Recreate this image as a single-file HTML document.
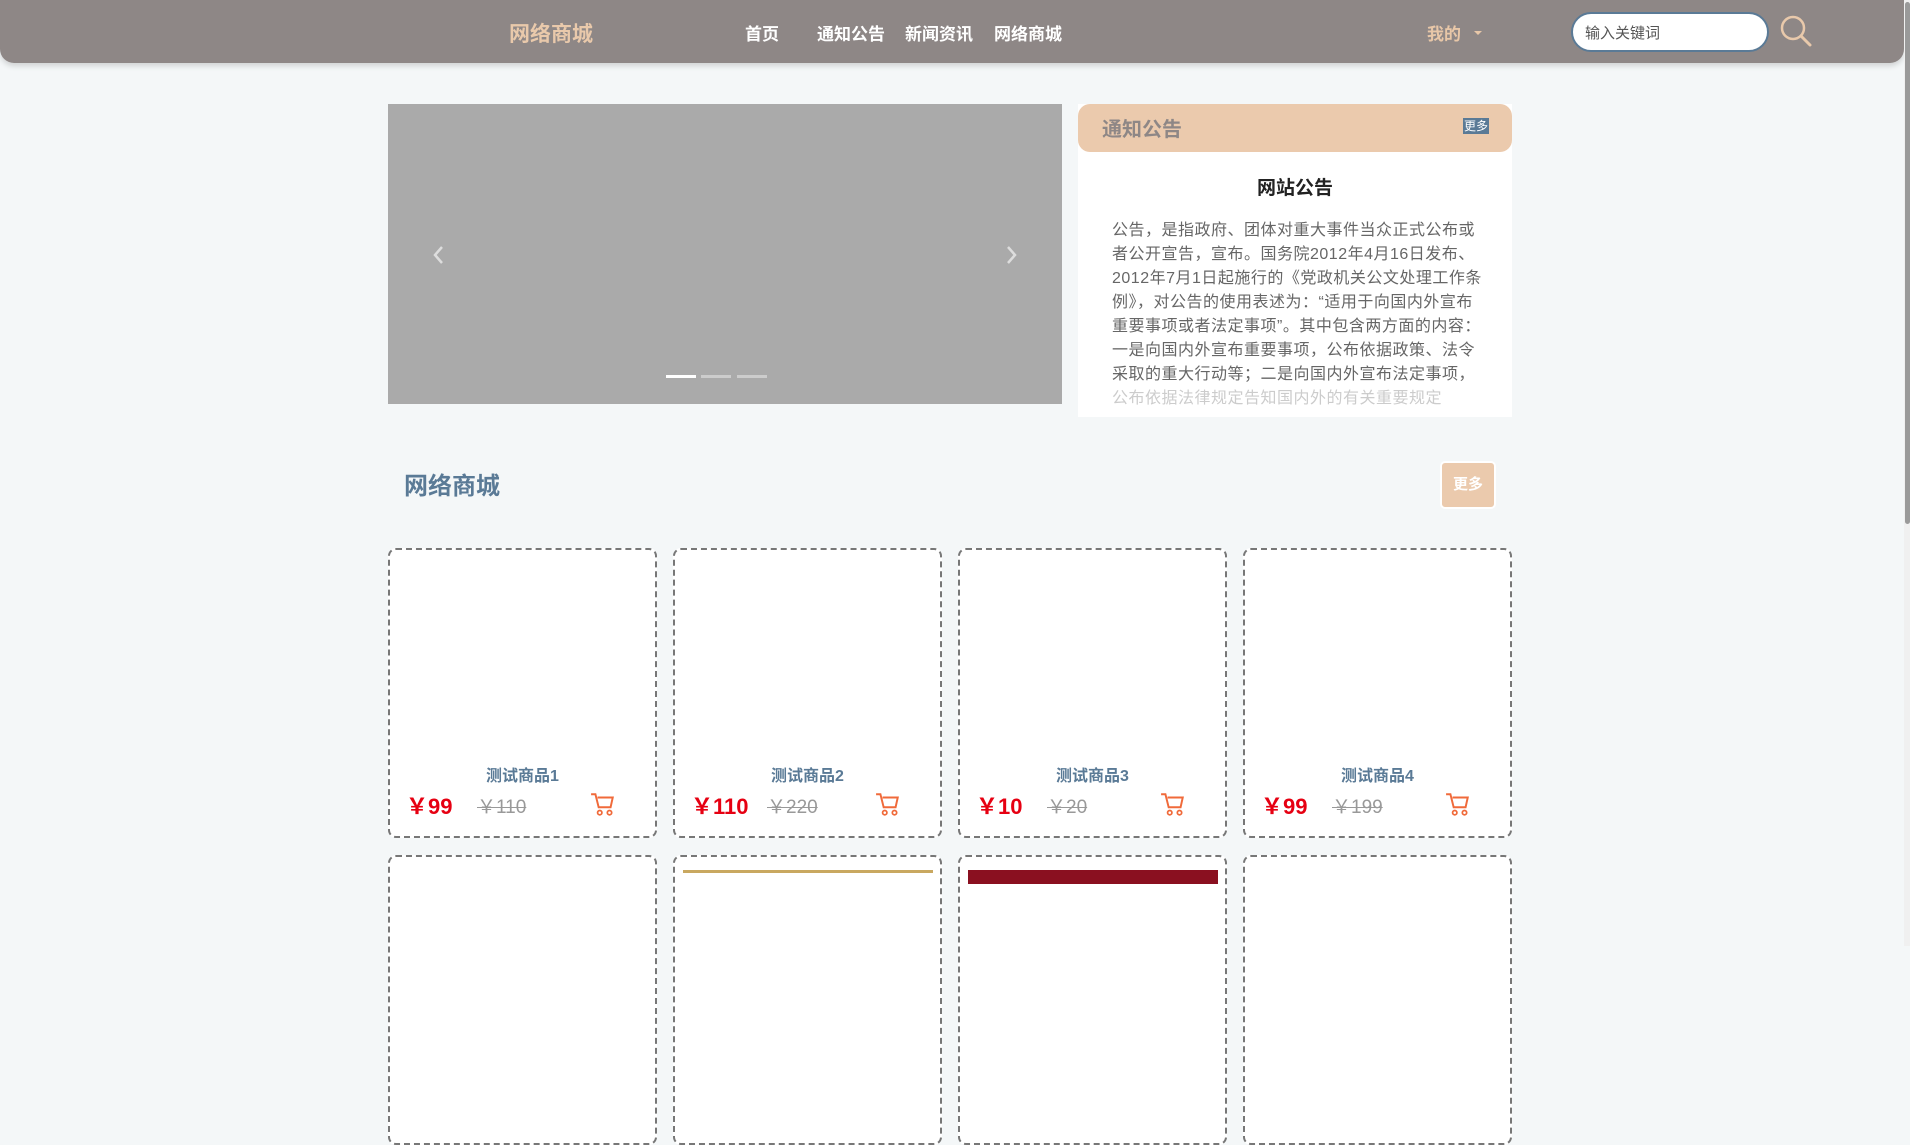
<!DOCTYPE html>
<html><head><meta charset="utf-8"><style>
*{margin:0;padding:0;box-sizing:border-box}
body{width:1910px;height:946px;overflow:hidden;background:#f4f7f8;font-family:"Liberation Sans","Noto Sans CJK SC",sans-serif;position:relative}
.a{position:absolute}
.hdr{left:0;top:0;width:1904px;height:63px;background:#8e8786;border-radius:0 0 14px 14px;box-shadow:0 3px 6px rgba(0,0,0,.15)}
.nav{color:#fff;font-weight:bold;font-size:17px;top:20px}
.card{width:269px;height:290px;border:2px dashed #777;border-radius:8px;background:#fff}
.name{left:0;width:100%;text-align:center;top:212px;color:#5a7a96;font-weight:bold;font-size:16px}
.pr{left:16px;top:239px;color:#e60012;font-weight:bold;font-size:22px}
.old{top:242px;color:#999;font-size:19px;text-decoration:line-through}
</style></head><body>
<div class="a hdr"></div>
<div class="a" style="left:509px;top:18px;color:#e9c9ab;font-weight:bold;font-size:21px">网络商城</div>
<div class="a nav" style="left:745px">首页</div>
<div class="a nav" style="left:817px">通知公告</div>
<div class="a nav" style="left:905px">新闻资讯</div>
<div class="a nav" style="left:994px">网络商城</div>
<div class="a" style="left:1427px;top:20px;color:#e8c7a8;font-weight:bold;font-size:17px">我的</div>
<div class="a" style="left:1474px;top:31px;width:0;height:0;border:4px solid transparent;border-top-color:#e8c7a8"></div>
<div class="a" style="left:1571px;top:12px;width:198px;height:40px;border:2px solid #5a7a96;border-radius:20px;background:#fff;padding:2px 0 0 12px;line-height:36px;font-size:15px;color:#555">输入关键词</div>
<svg class="a" style="left:1779px;top:14px" width="34" height="34" viewBox="0 0 34 34"><circle cx="14" cy="14" r="11" fill="none" stroke="#e9c9ab" stroke-width="2.5"/><line x1="22" y1="22" x2="31" y2="31" stroke="#e9c9ab" stroke-width="3" stroke-linecap="round"/></svg>
<div class="a" style="left:1904px;top:0;width:6px;height:946px;background:#f0f0f0"></div>
<div class="a" style="left:1905px;top:2px;width:5px;height:522px;background:#9a9a9a;border-radius:3px"></div>

<div class="a" style="left:388px;top:104px;width:674px;height:300px;background:#aaa"></div>
<svg class="a" style="left:431px;top:244px" width="16" height="22"><path d="M11 3 L4 11 L11 19" fill="none" stroke="#ddd" stroke-width="2.5"/></svg>
<svg class="a" style="left:1003px;top:244px" width="16" height="22"><path d="M5 3 L12 11 L5 19" fill="none" stroke="#ddd" stroke-width="2.5"/></svg>
<div class="a" style="left:666px;top:375px;width:30px;height:3px;background:#fff"></div>
<div class="a" style="left:701px;top:375px;width:30px;height:3px;background:#ccc"></div>
<div class="a" style="left:737px;top:375px;width:30px;height:3px;background:#ccc"></div>

<div class="a" style="left:1078px;top:104px;width:434px;height:313px;background:#fff;overflow:hidden">
 <div style="height:48px;background:#ebcaad;border-radius:12px;position:relative">
  <div class="a" style="left:24px;top:9px;color:#8e8786;font-weight:bold;font-size:20px">通知公告</div>
  <div class="a" style="left:385px;top:14px;background:#5a7a96;color:#fff;font-size:12px;line-height:16px;padding:0 1px">更多</div>
 </div>
 <div style="text-align:center;font-weight:bold;font-size:19px;color:#222;margin-top:21px">网站公告</div>
 <div style="margin:19px 0 0 34px;width:375px;font-size:16px;letter-spacing:0.5px;line-height:24px;color:#666">公告，是指政府、团体对重大事件当众正式公布或者公开宣告，宣布。国务院2012年4月16日发布、2012年7月1日起施行的《党政机关公文处理工作条例》，对公告的使用表述为：“适用于向国内外宣布重要事项或者法定事项”。其中包含两方面的内容：一是向国内外宣布重要事项，公布依据政策、法令采取的重大行动等；二是向国内外宣布法定事项，<span style="color:#ccc">公布依据法律规定告知国内外的有关重要规定</span></div>
</div>

<div class="a" style="left:404px;top:466px;color:#5a7a96;font-weight:bold;font-size:24px">网络商城</div>
<div class="a" style="left:1440px;top:461px;width:56px;height:48px;background:#ebcaad;border:2px solid #fff;border-radius:5px;color:#fff;font-weight:bold;font-size:15px;text-align:center;line-height:44px">更多</div>

<div class="a card" style="left:388px;top:548px"><div class="a name">测试商品1</div><div class="a pr">￥99</div><div class="a old" style="left:87px">￥110</div><svg class="a" style="left:200px;top:241px" width="26" height="26" viewBox="0 0 24 24"><path d="M1 3h4l3 12h11l2-9H7" fill="none" stroke="#f06a3a" stroke-width="1.8"/><circle cx="9" cy="20" r="2" fill="none" stroke="#f06a3a" stroke-width="1.6"/><circle cx="18" cy="20" r="2" fill="none" stroke="#f06a3a" stroke-width="1.6"/></svg></div>
<div class="a card" style="left:673px;top:548px"><div class="a name">测试商品2</div><div class="a pr">￥110</div><div class="a old" style="left:92px">￥220</div><svg class="a" style="left:200px;top:241px" width="26" height="26" viewBox="0 0 24 24"><path d="M1 3h4l3 12h11l2-9H7" fill="none" stroke="#f06a3a" stroke-width="1.8"/><circle cx="9" cy="20" r="2" fill="none" stroke="#f06a3a" stroke-width="1.6"/><circle cx="18" cy="20" r="2" fill="none" stroke="#f06a3a" stroke-width="1.6"/></svg></div>
<div class="a card" style="left:958px;top:548px"><div class="a name">测试商品3</div><div class="a pr">￥10</div><div class="a old" style="left:87px">￥20</div><svg class="a" style="left:200px;top:241px" width="26" height="26" viewBox="0 0 24 24"><path d="M1 3h4l3 12h11l2-9H7" fill="none" stroke="#f06a3a" stroke-width="1.8"/><circle cx="9" cy="20" r="2" fill="none" stroke="#f06a3a" stroke-width="1.6"/><circle cx="18" cy="20" r="2" fill="none" stroke="#f06a3a" stroke-width="1.6"/></svg></div>
<div class="a card" style="left:1243px;top:548px"><div class="a name">测试商品4</div><div class="a pr">￥99</div><div class="a old" style="left:87px">￥199</div><svg class="a" style="left:200px;top:241px" width="26" height="26" viewBox="0 0 24 24"><path d="M1 3h4l3 12h11l2-9H7" fill="none" stroke="#f06a3a" stroke-width="1.8"/><circle cx="9" cy="20" r="2" fill="none" stroke="#f06a3a" stroke-width="1.6"/><circle cx="18" cy="20" r="2" fill="none" stroke="#f06a3a" stroke-width="1.6"/></svg></div>

<div class="a card" style="left:388px;top:855px"></div>
<div class="a card" style="left:673px;top:855px"><div class="a" style="left:8px;top:13px;width:250px;height:3px;background:#c9a860"></div></div>
<div class="a card" style="left:958px;top:855px"><div class="a" style="left:8px;top:13px;width:250px;height:14px;background:#8a1020"></div></div>
<div class="a card" style="left:1243px;top:855px"></div>
</body></html>
